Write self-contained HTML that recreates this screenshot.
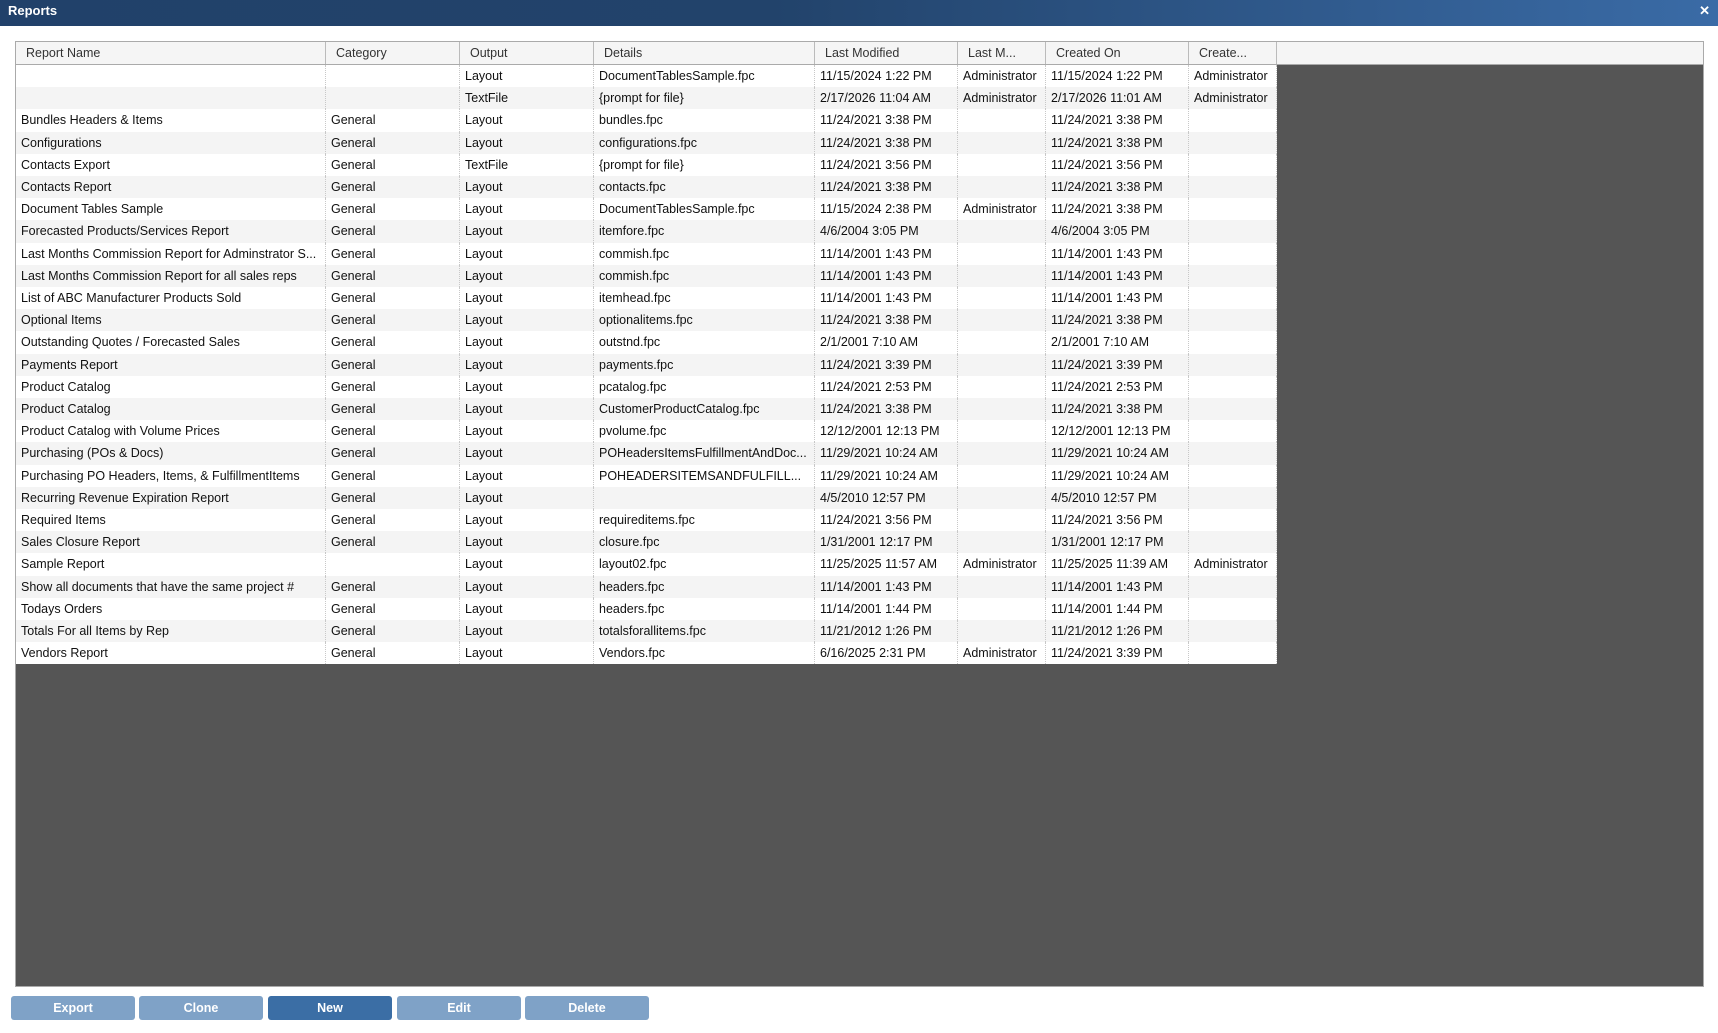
<!DOCTYPE html>
<html><head><meta charset="utf-8"><style>
*{margin:0;padding:0;box-sizing:border-box}
body{width:1718px;height:1033px;background:#fff;font-family:"Liberation Sans",Arial,sans-serif;position:relative;overflow:hidden;color:#111}
#title{position:absolute;left:0;top:0;width:1718px;height:26px;background:linear-gradient(90deg,#21416a 0%,#22436b 45%,#3a6ba6 100%);color:#fff;font-size:13px;font-weight:bold;line-height:22px;padding-left:8px}
#close{position:absolute;right:8px;top:0;color:#fff;font-size:13px;font-weight:bold;line-height:22px}
#grid{position:absolute;left:15px;top:41px;width:1689px;height:946px;background:#555;border:1px solid #aaa}
#hdr{position:absolute;left:0;top:0;width:100%;height:23px;background:#f5f5f5;border-bottom:1px solid #aaa}
.h{position:absolute;top:0;height:22px;line-height:22px;font-size:12.5px;color:#333;padding-left:10px;border-right:1px solid #bbb;white-space:nowrap;overflow:hidden}
.r{position:absolute;left:0;height:22.2px;width:1261px}
.r:nth-child(odd){background:#fff}.r:nth-child(even){background:#f4f4f4}
.c{position:absolute;top:0;height:100%;line-height:22px;font-size:12.5px;padding-left:5px;border-right:1px dotted #c8c8c8;white-space:nowrap;overflow:hidden}
.btn{position:absolute;top:996px;height:24px;width:124px;background:#7fa2c7;color:#fff;font-size:12.5px;font-weight:bold;text-align:center;line-height:24px;border-radius:3px}
</style></head><body>
<div id="title">Reports<span id="close">✕</span></div>
<div id="grid">
<div id="hdr">
<div class="h" style="left:0;width:310px">Report Name</div>
<div class="h" style="left:310px;width:134px">Category</div>
<div class="h" style="left:444px;width:134px">Output</div>
<div class="h" style="left:578px;width:221px">Details</div>
<div class="h" style="left:799px;width:143px">Last Modified</div>
<div class="h" style="left:942px;width:88px">Last M...</div>
<div class="h" style="left:1030px;width:143px">Created On</div>
<div class="h" style="left:1173px;width:88px">Create...</div>
</div>
<div id="rows" style="position:absolute;left:0;top:23px"></div>
</div>
<div class="btn" style="left:11px">Export</div>
<div class="btn" style="left:139px">Clone</div>
<div class="btn" style="left:268px;background:#3b6ea5">New</div>
<div class="btn" style="left:397px">Edit</div>
<div class="btn" style="left:525px">Delete</div>
<script>
var d=[
["","","Layout","DocumentTablesSample.fpc","11/15/2024 1:22 PM","Administrator","11/15/2024 1:22 PM","Administrator"],
["","","TextFile","{prompt for file}","2/17/2026 11:04 AM","Administrator","2/17/2026 11:01 AM","Administrator"],
["Bundles Headers & Items","General","Layout","bundles.fpc","11/24/2021 3:38 PM","","11/24/2021 3:38 PM",""],
["Configurations","General","Layout","configurations.fpc","11/24/2021 3:38 PM","","11/24/2021 3:38 PM",""],
["Contacts Export","General","TextFile","{prompt for file}","11/24/2021 3:56 PM","","11/24/2021 3:56 PM",""],
["Contacts Report","General","Layout","contacts.fpc","11/24/2021 3:38 PM","","11/24/2021 3:38 PM",""],
["Document Tables Sample","General","Layout","DocumentTablesSample.fpc","11/15/2024 2:38 PM","Administrator","11/24/2021 3:38 PM",""],
["Forecasted Products/Services Report","General","Layout","itemfore.fpc","4/6/2004 3:05 PM","","4/6/2004 3:05 PM",""],
["Last Months Commission Report for Adminstrator S...","General","Layout","commish.fpc","11/14/2001 1:43 PM","","11/14/2001 1:43 PM",""],
["Last Months Commission Report for all sales reps","General","Layout","commish.fpc","11/14/2001 1:43 PM","","11/14/2001 1:43 PM",""],
["List of ABC Manufacturer Products Sold","General","Layout","itemhead.fpc","11/14/2001 1:43 PM","","11/14/2001 1:43 PM",""],
["Optional Items","General","Layout","optionalitems.fpc","11/24/2021 3:38 PM","","11/24/2021 3:38 PM",""],
["Outstanding Quotes / Forecasted Sales","General","Layout","outstnd.fpc","2/1/2001 7:10 AM","","2/1/2001 7:10 AM",""],
["Payments Report","General","Layout","payments.fpc","11/24/2021 3:39 PM","","11/24/2021 3:39 PM",""],
["Product Catalog","General","Layout","pcatalog.fpc","11/24/2021 2:53 PM","","11/24/2021 2:53 PM",""],
["Product Catalog","General","Layout","CustomerProductCatalog.fpc","11/24/2021 3:38 PM","","11/24/2021 3:38 PM",""],
["Product Catalog with Volume Prices","General","Layout","pvolume.fpc","12/12/2001 12:13 PM","","12/12/2001 12:13 PM",""],
["Purchasing (POs & Docs)","General","Layout","POHeadersItemsFulfillmentAndDoc...","11/29/2021 10:24 AM","","11/29/2021 10:24 AM",""],
["Purchasing PO Headers, Items, & FulfillmentItems","General","Layout","POHEADERSITEMSANDFULFILL...","11/29/2021 10:24 AM","","11/29/2021 10:24 AM",""],
["Recurring Revenue Expiration Report","General","Layout","","4/5/2010 12:57 PM","","4/5/2010 12:57 PM",""],
["Required Items","General","Layout","requireditems.fpc","11/24/2021 3:56 PM","","11/24/2021 3:56 PM",""],
["Sales Closure Report","General","Layout","closure.fpc","1/31/2001 12:17 PM","","1/31/2001 12:17 PM",""],
["Sample Report","","Layout","layout02.fpc","11/25/2025 11:57 AM","Administrator","11/25/2025 11:39 AM","Administrator"],
["Show all documents that have the same project #","General","Layout","headers.fpc","11/14/2001 1:43 PM","","11/14/2001 1:43 PM",""],
["Todays Orders","General","Layout","headers.fpc","11/14/2001 1:44 PM","","11/14/2001 1:44 PM",""],
["Totals For all Items by Rep","General","Layout","totalsforallitems.fpc","11/21/2012 1:26 PM","","11/21/2012 1:26 PM",""],
["Vendors Report","General","Layout","Vendors.fpc","6/16/2025 2:31 PM","Administrator","11/24/2021 3:39 PM",""]];
var L=[0,310,444,578,799,942,1030,1173],W=[310,134,134,221,143,88,143,88];
var h="";
d.forEach(function(r,i){h+='<div class="r" style="top:'+(i*22.2)+'px">';
r.forEach(function(t,j){h+='<div class="c" style="left:'+L[j]+'px;width:'+W[j]+'px">'+t.replace(/&/g,'&amp;')+'</div>'});h+='</div>'});
document.getElementById('rows').innerHTML=h;
</script>
</body></html>
